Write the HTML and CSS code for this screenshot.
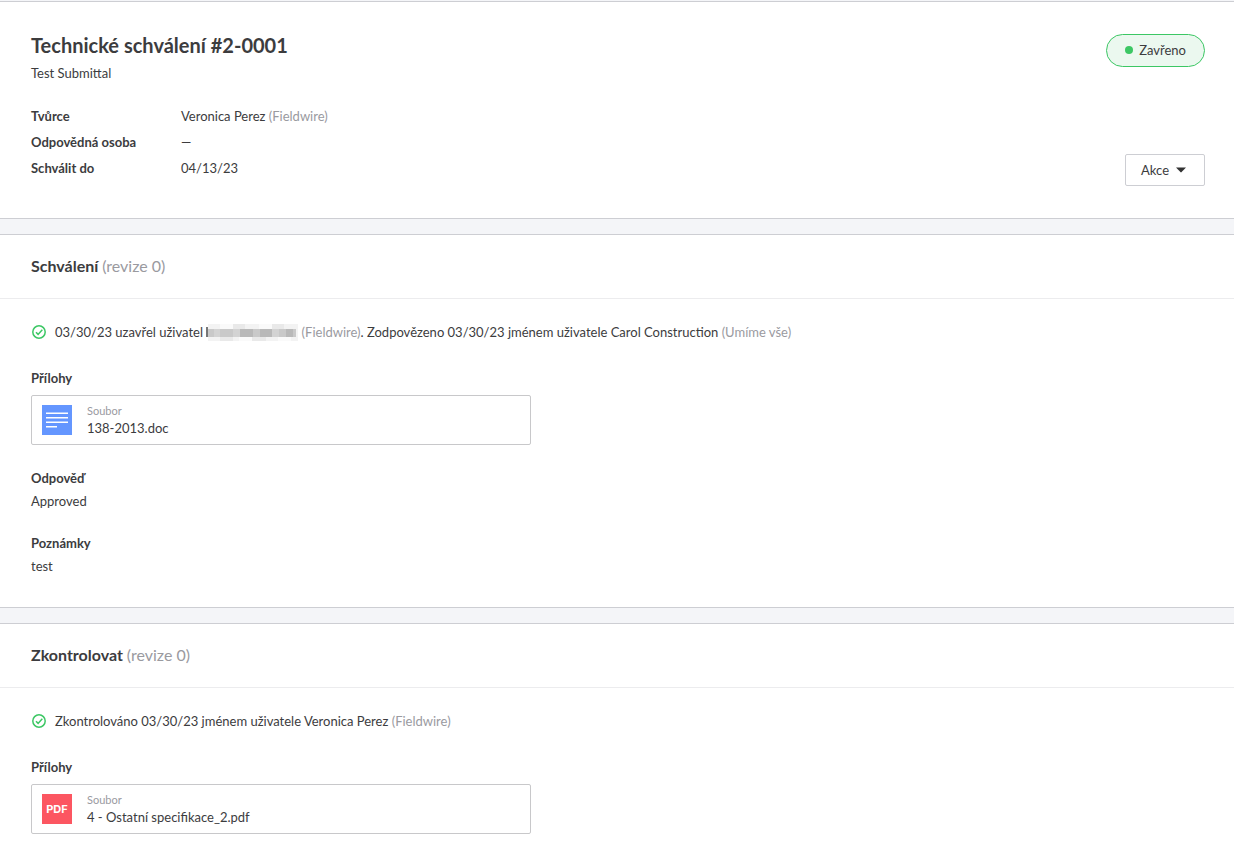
FILE: index.html
```
<!DOCTYPE html>
<html lang="cs">
<head>
    <meta charset="UTF-8">
    <meta name="viewport" content="width=device-width, initial-scale=1.0">
    <title>Technické schválení #2-0001</title>
    <link rel="stylesheet" href="styles.css">
</head>
<body>
    <header class="panel summary">
        <div class="summary-info">
            <h1>Technické schválení #2-0001</h1>
            <p>Test Submittal</p>
            <dl class="meta">
                <dt>Tvůrce</dt>
                <dd>Veronica Perez <span class="muted">(Fieldwire)</span></dd>
                <dt>Odpovědná osoba</dt>
                <dd>—</dd>
                <dt>Schválit do</dt>
                <dd>04/13/23</dd>
            </dl>
        </div>
        <div class="summary-side">
            <span class="status"><span class="status-dot"></span>Zavřeno</span>
            <button type="button" class="actions">Akce
                <svg class="caret" viewBox="0 0 10 6" aria-hidden="true"><path d="M0 .5h10L5.6 5.1q-.6.6-1.2 0z"/></svg>
            </button>
        </div>
    </header>

    <section class="panel">
        <h2>Schválení <span class="muted">(revize 0)</span></h2>
        <div class="panel-body">
            <p class="event">
                <svg class="check" viewBox="0 0 14 14" aria-hidden="true"><circle cx="7" cy="7" r="6.2"/><path d="M4 7.3l2.1 2.1L10.3 4.8"/></svg>
                <span>03/30/23 uzavřel uživatel <svg class="redacted" viewBox="0 0 92 17" role="img" aria-label="skryté jméno">
                    <path fill="#777" d="M0 3h2v10H0z"/>
                    <path fill="#f3f3f3" d="M2 0h90v17H2z"/>
                    <path fill="#e9e9e9" d="M27 0h12v5H27zM66 0h12v5H66zM14 12h13v5H14zM46 12h14v5H46z"/>
                    <path fill="#fafafa" d="M14 0h13v5H14zM53 0h13v5H53zM33 12h13v5H33zM72 12h13v5H72z"/>
                    <path fill="#c9c9c9" d="M2 5h88v8H2z"/>
                    <path fill="#b9b9b9" d="M34 5h13v8H34zM54 5h12v8H54zM80 5h7v8H80z"/>
                    <path fill="#d3d3d3" d="M8 5h6v8H8zM27 5h7v8H27zM66 5h7v8H66z"/>
                </svg> <span class="muted">(Fieldwire)</span>. Zodpovězeno 03/30/23 jménem uživatele Carol Construction <span class="muted">(Umíme vše)</span></span>
            </p>
            <h3>Přílohy</h3>
            <a href="#" class="attachment">
                <svg class="file-icon doc" viewBox="0 0 30 30" aria-hidden="true"><path d="M4 8.2h22M4 12.7h22M4 17.2h22M4 21.7h11"/></svg>
                <span class="file-text">
                    <small>Soubor</small>
                    <span>138-2013.doc</span>
                </span>
            </a>
            <h3>Odpověď</h3>
            <p>Approved</p>
            <h3>Poznámky</h3>
            <p>test</p>
        </div>
    </section>

    <section class="panel">
        <h2>Zkontrolovat <span class="muted">(revize 0)</span></h2>
        <div class="panel-body">
            <p class="event">
                <svg class="check" viewBox="0 0 14 14" aria-hidden="true"><circle cx="7" cy="7" r="6.2"/><path d="M4 7.3l2.1 2.1L10.3 4.8"/></svg>
                <span>Zkontrolováno 03/30/23 jménem uživatele Veronica Perez <span class="muted">(Fieldwire)</span></span>
            </p>
            <h3>Přílohy</h3>
            <a href="#" class="attachment">
                <span class="file-icon pdf">PDF</span>
                <span class="file-text">
                    <small>Soubor</small>
                    <span>4 - Ostatní specifikace_2.pdf</span>
                </span>
            </a>
        </div>
    </section>
</body>
</html>
```
FILE: styles.css
```
* {
    box-sizing: border-box;
}
body {
    margin: 0;
    padding-top: 1px;
    background-color: #f4f5f8;
    color: #3c3c3e;
    font-family: Lato, "Liberation Sans", sans-serif;
    font-size: 13px;
    line-height: 20px;
}
h1, h2, h3, p, dl, dd {
    margin: 0;
}
.muted {
    color: #9a9a9f;
    font-weight: 400;
}
.panel {
    background-color: #fff;
    border-top: 1px solid #cdced3;
    border-bottom: 1px solid #cdced3;
    margin-bottom: 15px;
}
.panel:last-child {
    border-bottom: 0;
    margin-bottom: 0;
}
.summary {
    display: flex;
    justify-content: space-between;
    padding: 32px 29px 32px 31px;
}
h1 {
    font-size: 20px;
    line-height: 22px;
    margin-bottom: 7px;
}
.meta {
    display: grid;
    grid-template-columns: 150px auto;
    row-gap: 6px;
    margin: 23px 0 8px;
}
.meta dt {
    font-weight: 700;
}
.summary-side {
    display: flex;
    flex-direction: column;
    justify-content: space-between;
    align-items: flex-end;
}
.status {
    display: flex;
    align-items: center;
    gap: 6px;
    height: 33px;
    padding: 0 18px 2px;
    border: 1px solid #3cc764;
    border-radius: 17px;
    background-color: #ebf8ef;
}
.status-dot {
    width: 8px;
    height: 8px;
    border-radius: 50%;
    background-color: #3cc764;
}
.actions {
    display: flex;
    align-items: center;
    gap: 7px;
    height: 32px;
    padding: 0 18px 0 15px;
    border: 1px solid #cdced3;
    border-radius: 2px;
    background-color: #fff;
    color: inherit;
    font: inherit;
}
.caret {
    width: 10px;
    height: 6px;
    fill: #333;
}
h2 {
    padding: 20px 31px 22px;
    border-bottom: 1px solid #ececee;
    font-size: 16px;
    line-height: 21px;
}
.panel-body {
    padding: 23px 31px 31px;
}
.panel:last-child .panel-body {
    padding-bottom: 14px;
}
.event {
    display: flex;
    align-items: center;
    gap: 9px;
    padding-left: 1px;
    margin-bottom: 26px;
}
.check {
    width: 14px;
    height: 14px;
    fill: none;
    stroke: #3cc764;
    stroke-width: 1.5;
}
.redacted {
    width: 92px;
    height: 17px;
    vertical-align: -4px;
}
h3 {
    font-size: 13px;
    margin-bottom: 3px;
}
.attachment + h3 {
    margin-top: 23px;
}
p + h3 {
    margin-top: 22px;
}
.attachment {
    display: flex;
    align-items: center;
    gap: 15px;
    max-width: 500px;
    height: 50px;
    margin-top: 7px;
    padding: 0 10px;
    border: 1px solid #c8c8ca;
    border-radius: 2px;
    color: inherit;
    text-decoration: none;
}
.file-icon {
    width: 30px;
    height: 30px;
}
.doc {
    background-color: #6496ff;
    stroke: #fff;
    stroke-width: 1.5;
}
.pdf {
    background-color: #fc5661;
    color: #fff;
    font: 700 11px/30px Inter, sans-serif;
    text-align: center;
}
.file-text {
    display: flex;
    flex-direction: column;
    line-height: 18px;
}
.file-text small {
    color: #9a9a9f;
    font-size: 11px;
    line-height: 16px;
}
```
